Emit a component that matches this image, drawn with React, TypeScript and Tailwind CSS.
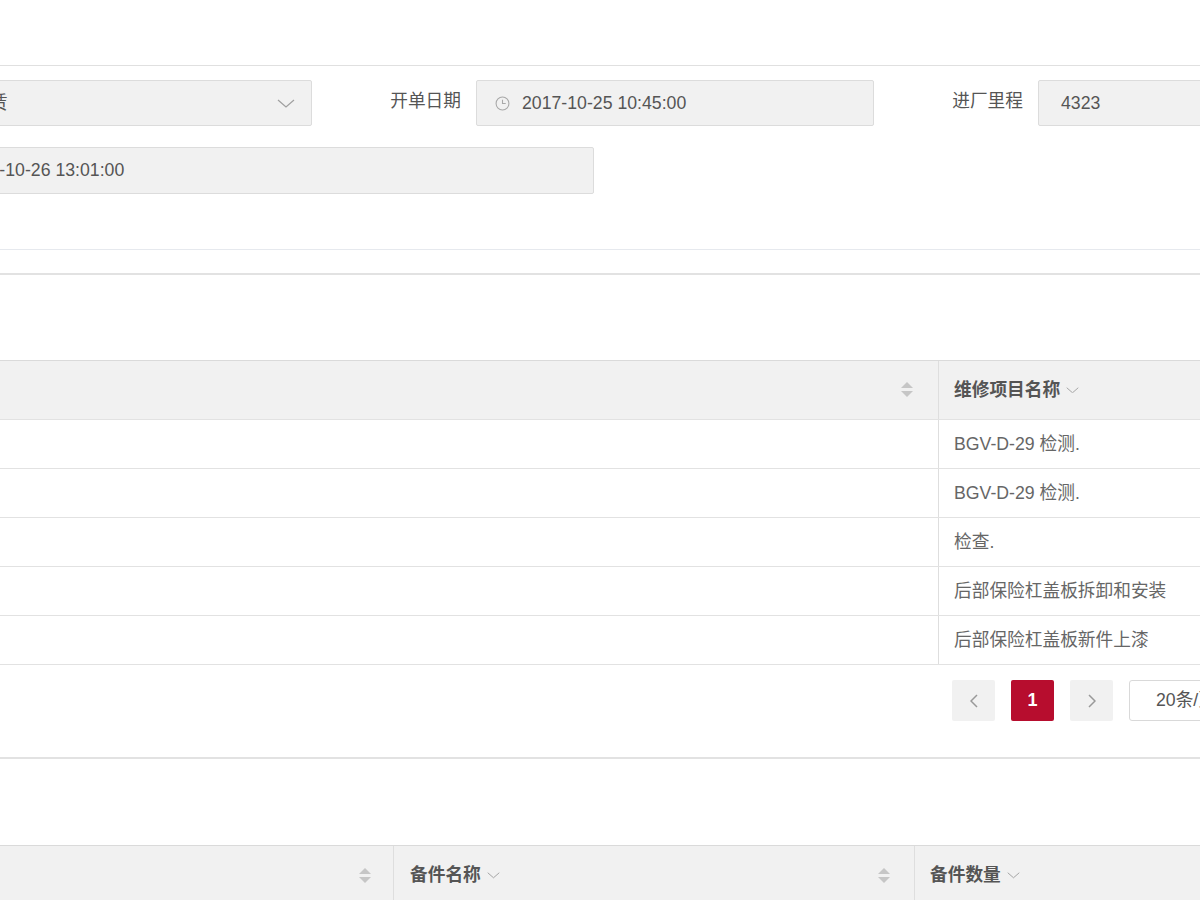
import React from "react";

const font = "font-['Liberation_Sans','Noto_Sans_CJK_SC',sans-serif]";

const ClockIcon = () => (
  <svg width="15" height="15" viewBox="0 0 14 14" fill="none" stroke="#a8a8a8" strokeWidth="1">
    <circle cx="7" cy="7" r="6" />
    <path d="M7 3.5V7h3" />
  </svg>
);

const ChevronDown = ({ w = 18, color = "#a0a0a0" }: { w?: number; color?: string }) => (
  <svg width={w} height={w / 2} viewBox="0 0 18 9" fill="none" stroke={color} strokeWidth="1.2">
    <polyline points="1,1 9,8 17,1" />
  </svg>
);

const SortIcon = () => (
  <svg width="14" height="20" viewBox="0 0 14 20" fill="#c6c6c6">
    <polygon points="7,2 13,8 1,8" />
    <polygon points="1,11 13,11 7,17" />
  </svg>
);

const Field = ({ label, children, inputW }: { label: string; children: React.ReactNode; inputW: string }) => (
  <div className="flex items-center shrink-0">
    <div className="w-[164px] pr-[15px] text-right text-[17.7px] text-[#555] leading-none -mt-[3px]">{label}</div>
    <div
      className={`${inputW} h-[46px] bg-[#f1f1f1] border border-[#dcdcdc] rounded-[2px] flex items-center text-[17.7px] text-[#555]`}
    >
      {children}
    </div>
  </div>
);

const rows = ["BGV-D-29 检测.", "BGV-D-29 检测.", "检查.", "后部保险杠盖板拆卸和安装", "后部保险杠盖板新件上漆"];

export default function App() {
  return (
    <div className={`w-[1200px] h-[900px] overflow-hidden bg-white ${font}`}>
      <div className="h-[66px] border-b border-[#e0e0e0]" />

      {/* form */}
      <div className="ml-[-250px] w-[1800px] pt-[14px]">
        <div className="flex">
          <Field label="业务类型" inputW="w-[398px]">
            <span className="pl-[22px] flex-1">融资租赁</span>
            <span className="pr-[16px]">
              <ChevronDown />
            </span>
          </Field>
          <Field label="开单日期" inputW="w-[398px]">
            <span className="pl-[18px] pr-[12px] flex">
              <ClockIcon />
            </span>
            2017-10-25 10:45:00
          </Field>
          <Field label="进厂里程" inputW="w-[398px]">
            <span className="pl-[22px]">4323</span>
          </Field>
        </div>
        <div className="flex mt-[21px]">
          <Field label="交车日期" inputW="w-[680px] h-[47px]">
            <span className="pl-[18px] pr-[12px] flex">
              <ClockIcon />
            </span>
            2017-10-26 13:01:00
          </Field>
        </div>
      </div>

      <div className="mt-[55px] border-b border-[#e6e9ee]" />
      <div className="mt-[23px] border-b-2 border-[#e2e2e2]" />

      {/* repair items table */}
      <div className="mt-[85px] border-t border-[#dadada]">
        <div className="flex h-[59px] bg-[#f1f1f1] border-b border-[#e2e2e2]">
          <div className="w-[939px] shrink-0 flex items-center justify-end pr-[24px] border-r border-[#dedede]">
            <SortIcon />
          </div>
          <div className="flex-1 flex items-center pl-[15px] gap-[6px] text-[17.7px] font-bold text-[#555]">
            维修项目名称
            <ChevronDown w={13} color="#999" />
          </div>
        </div>
        {rows.map((r, i) => (
          <div key={i} className="flex h-[49px] border-b border-[#e2e2e2]">
            <div className="w-[939px] shrink-0 border-r border-[#dedede]" />
            <div className="flex-1 flex items-center pl-[15px] text-[17.7px] text-[#666]">{r}</div>
          </div>
        ))}
      </div>

      {/* pagination */}
      <div className="w-[1400px] flex items-center pl-[952px] gap-[16px] mt-[15px] h-[41px]">
        <div className="w-[43px] h-[41px] shrink-0 bg-[#f1f1f1] rounded-[2px] flex items-center justify-center">
          <svg width="8" height="14" viewBox="0 0 8 14" fill="none" stroke="#999" strokeWidth="1.5">
            <polyline points="7,1 1,7 7,13" />
          </svg>
        </div>
        <div className="w-[43px] h-[41px] shrink-0 bg-[#b70d2e] rounded-[2px] flex items-center justify-center text-white font-bold text-[18px]">
          1
        </div>
        <div className="w-[43px] h-[41px] shrink-0 bg-[#f1f1f1] rounded-[2px] flex items-center justify-center">
          <svg width="8" height="14" viewBox="0 0 8 14" fill="none" stroke="#999" strokeWidth="1.5">
            <polyline points="1,1 7,7 1,13" />
          </svg>
        </div>
        <div className="w-[120px] h-[41px] shrink-0 border border-[#d9d9d9] rounded-[3px] flex items-center pl-[26px] text-[17.7px] text-[#555] whitespace-nowrap">
          20条/页
        </div>
      </div>

      <div className="mt-[36px] border-b-2 border-[#e2e2e2]" />

      {/* parts table */}
      <div className="mt-[86px] border-t border-[#dadada]">
        <div className="flex h-[59px] bg-[#f1f1f1]">
          <div className="w-[394px] shrink-0 flex items-center justify-end pr-[21px] border-r border-[#dedede]">
            <SortIcon />
          </div>
          <div className="w-[521px] shrink-0 flex items-center border-r border-[#dedede] pl-[16px] pr-[23px]">
            <div className="flex-1 flex items-center gap-[6px] text-[17.7px] font-bold text-[#555]">
              备件名称
              <ChevronDown w={13} color="#999" />
            </div>
            <SortIcon />
          </div>
          <div className="flex-1 flex items-center pl-[15px] gap-[6px] text-[17.7px] font-bold text-[#555]">
            备件数量
            <ChevronDown w={13} color="#999" />
          </div>
        </div>
      </div>
    </div>
  );
}
